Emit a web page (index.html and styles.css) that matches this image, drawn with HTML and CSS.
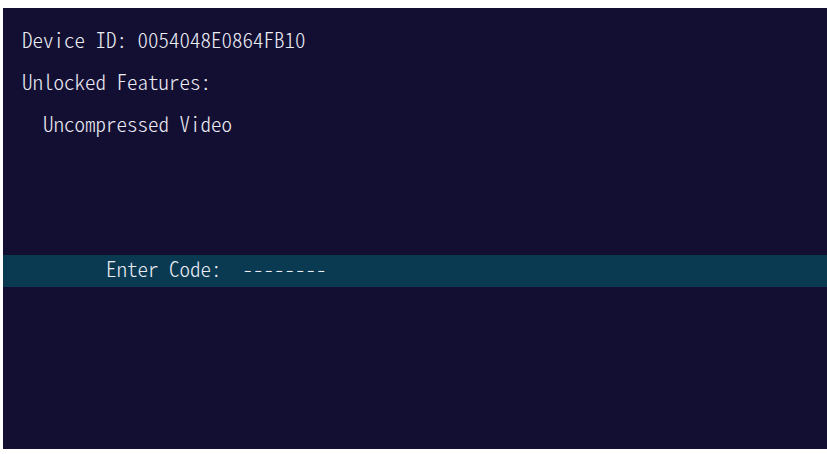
FILE: index.html
```html
<!DOCTYPE html>
<html>
<head>
<meta charset="utf-8">
<link rel="stylesheet" href="styles.css">
</head>
<body>
<div class="screen">
  <div class="info">
    <div class="line">Device ID: 0054048E0864FB10</div>
    <div class="line">Unlocked Features:</div>
    <div class="line">  Uncompressed Video</div>
  </div>
  <div class="entry">Enter Code:  --------</div>
</div>
</body>
</html>
```
FILE: styles.css
```css
html, body {
  margin: 0;
  padding: 0;
  background: #ffffff;
}
.screen {
  margin: 8px 0 0 3px;
  height: 441px;
  background: #130f33;
  color: #ececf4;
  font-family: "Noto Sans CJK JP", "DejaVu Sans Mono", monospace;
  font-size: 21px;
  font-weight: 300;
  font-feature-settings: "hwid" 1;
  display: flex;
  flex-direction: column;
}
.info {
  padding: 10px 0 0 19px;
}
.line {
  white-space: pre;
  line-height: 42px;
  height: 42px;
}
.entry {
  white-space: pre;
  margin-top: 111px;
  height: 26px;
  line-height: 26px;
  padding: 0 0 6px 103px;
  background: #0a3a52;
}
```
